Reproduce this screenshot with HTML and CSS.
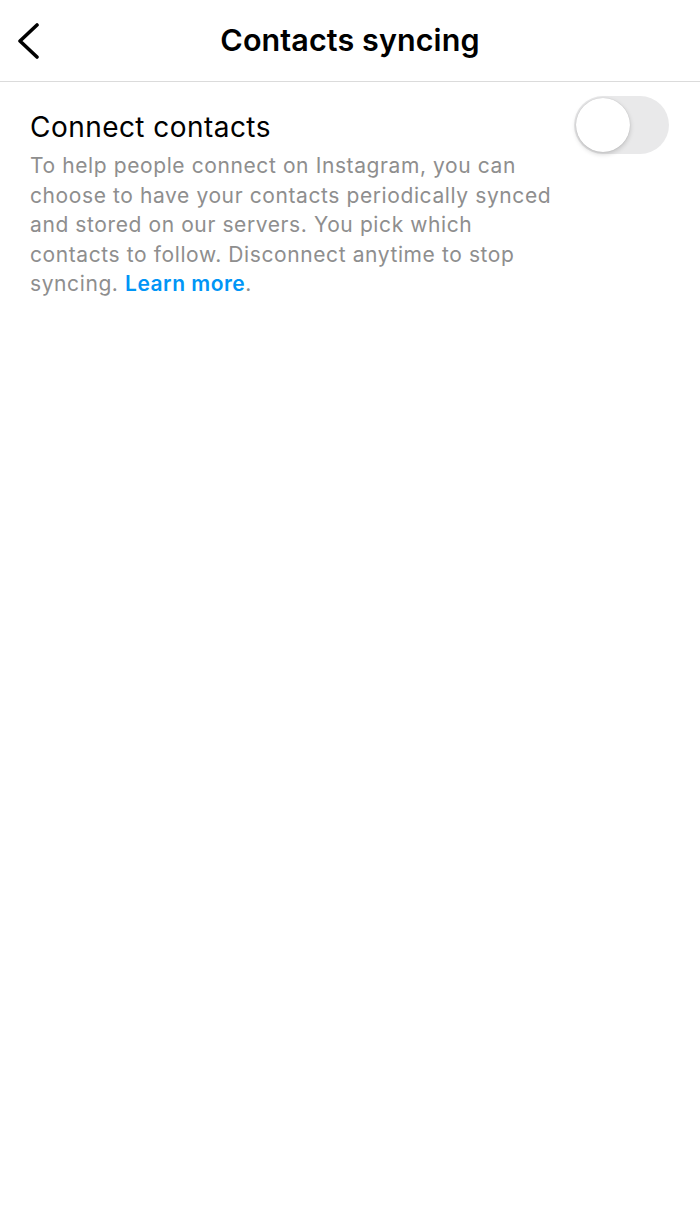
FILE: index.html
```html
<!DOCTYPE html>
<html>
<head>
<meta charset="utf-8">
<link rel="stylesheet" href="styles.css">
</head>
<body>
<header class="topbar">
  <button class="back" aria-label="Back">
    <svg width="24" height="36" viewBox="0 0 24 36"><path d="M21 2 L4 18 L21 34" fill="none" stroke="#000" stroke-width="3.6" stroke-linecap="round" stroke-linejoin="round"/></svg>
  </button>
  <h1 class="title">Contacts syncing</h1>
  <span class="spacer"></span>
</header>
<main class="content">
  <section class="row">
    <div class="text">
      <h2 class="label">Connect contacts</h2>
      <p class="desc">To help people connect on Instagram, you can choose to have your contacts periodically synced and stored on our servers. You pick which contacts to follow. Disconnect anytime to stop syncing. <a class="link" href="#">Learn more</a>.</p>
    </div>
    <div class="toggle"><span class="knob"></span></div>
  </section>
</main>
</body>
</html>
```
FILE: styles.css
```css
* { box-sizing: border-box; }
html, body { margin: 0; padding: 0; background: #fff; }
body { font-family: Inter, "Noto Sans", sans-serif; color: #000; width: 700px; height: 1207px; }
.topbar {
  height: 82px;
  display: flex;
  align-items: center;
  justify-content: space-between;
  padding: 0 14px 0 14px;
  border-bottom: 1px solid #dbdbdb;
}
.back { background: none; border: 0; padding: 0; width: 40px; height: 40px; display: flex; align-items: center; justify-content: flex-start; }
.back svg { margin-left: 2px; }
.title { margin: 0; font-size: 30.5px; font-weight: 600; letter-spacing: 0.1px; margin-top: -2px; }
.spacer { width: 40px; }
.content { padding: 14px 0 0 30px; }
.row { display: flex; justify-content: space-between; align-items: flex-start; }
.text { width: 526px; }
.label { margin: 14px 0 0 0; font-size: 28px; font-weight: 400; line-height: 34px; letter-spacing: 0.45px; }
.desc { margin: 7px 0 0 0; font-size: 21px; line-height: 29.5px; color: #8e8e8e; letter-spacing: 0.6px; }
.link { color: #0095f6; font-weight: 600; text-decoration: none; letter-spacing: 0.5px; }
.toggle {
  width: 95px; height: 58px; border-radius: 29px;
  background: #e9e9ea;
  padding: 2px;
  display: flex; align-items: center;
  margin-right: 31px;
}
.knob { width: 54px; height: 54px; border-radius: 50%; background: #fff; box-shadow: 0 2px 5px rgba(0,0,0,0.18), 0 0 1px rgba(0,0,0,0.2); }
```
